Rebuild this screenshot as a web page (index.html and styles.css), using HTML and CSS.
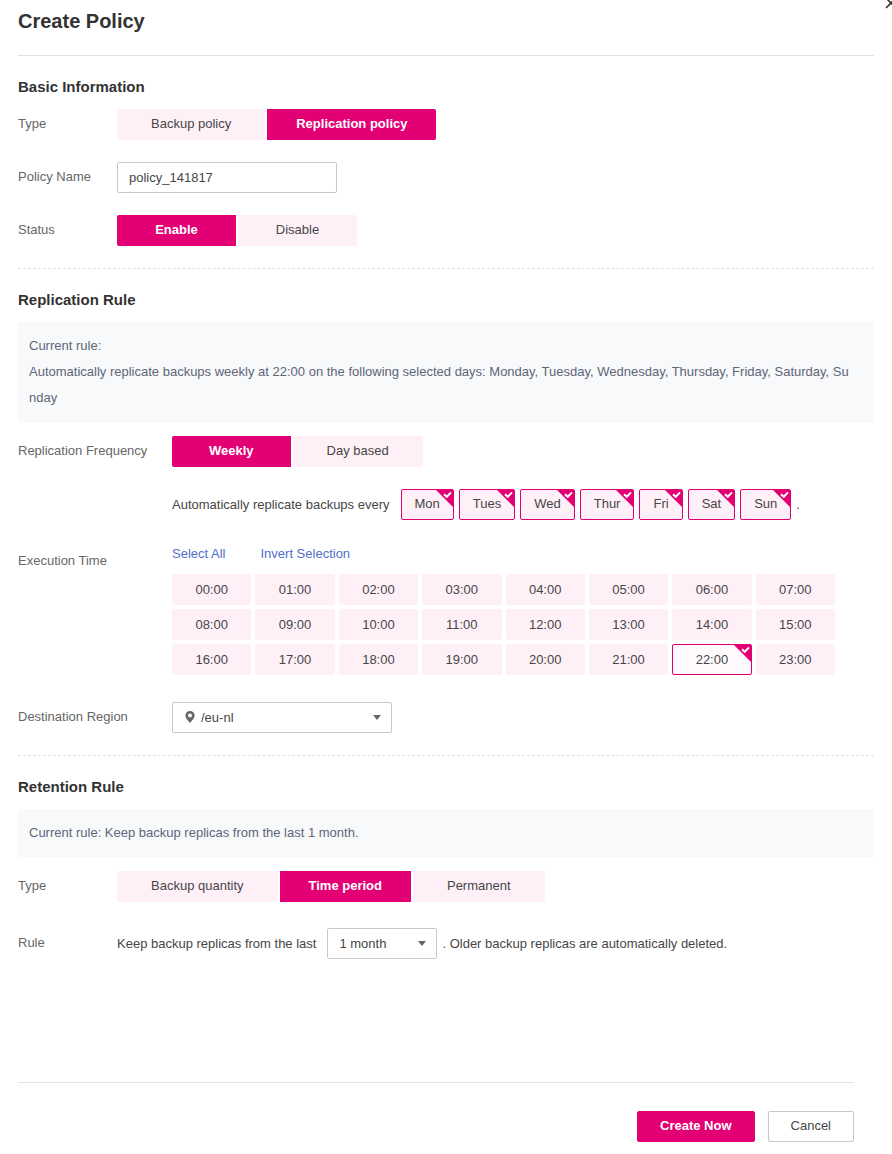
FILE: index.html
```html
<!DOCTYPE html>
<html lang="en">
<head>
<meta charset="utf-8">
<meta name="viewport" content="width=device-width, initial-scale=1">
<title>Create Policy</title>
<link rel="stylesheet" href="styles.css">
</head>
<body>
<svg class="sprite" aria-hidden="true">
  <symbol id="corner" viewBox="0 0 17 17">
    <path d="M0 0h17v17z" fill="#e20074"/>
    <path d="M8 4.200l2.800 2.600L15 2.400" fill="none" stroke="#fff" stroke-width="2"/>
  </symbol>
</svg>
<form class="dialog">
  <header class="dialog-header">
    <h1>Create Policy</h1>
    <button type="button" class="close" aria-label="Close">
      <svg viewBox="0 0 12 12" width="12" height="12"><path d="M1 1l10 10M11 1L1 11" stroke="#333" stroke-width="1.6"/></svg>
    </button>
  </header>

  <section class="section">
    <h2>Basic Information</h2>
    <div class="row">
      <span class="label" id="type-label">Type</span>
      <div class="segments" role="group" aria-labelledby="type-label">
        <button type="button">Backup policy</button>
        <button type="button" class="active" aria-pressed="true">Replication policy</button>
      </div>
    </div>
    <div class="row">
      <label class="label" for="policy-name">Policy Name</label>
      <input class="text-box" id="policy-name" type="text" value="policy_141817">
    </div>
    <div class="row">
      <span class="label" id="status-label">Status</span>
      <div class="segments even" role="group" aria-labelledby="status-label">
        <button type="button" class="active" aria-pressed="true">Enable</button>
        <button type="button">Disable</button>
      </div>
    </div>
  </section>

  <section class="section wide-labels">
    <h2>Replication Rule</h2>
    <p class="summary long">Current rule:<br>Automatically replicate backups weekly at 22:00 on the following selected days: Monday, Tuesday, Wednesday, Thursday, Friday, Saturday, Sunday</p>
    <div class="row">
      <span class="label" id="freq-label">Replication Frequency</span>
      <div class="frequency">
        <div class="segments" role="group" aria-labelledby="freq-label">
          <button type="button" class="active weekly" aria-pressed="true">Weekly</button>
          <button type="button">Day based</button>
        </div>
        <div class="sentence">
          <span>Automatically replicate backups every</span>
          <div class="days">
            <label class="tick"><input type="checkbox" checked>Mon<svg><use href="#corner"/></svg></label>
            <label class="tick"><input type="checkbox" checked>Tues<svg><use href="#corner"/></svg></label>
            <label class="tick"><input type="checkbox" checked>Wed<svg><use href="#corner"/></svg></label>
            <label class="tick"><input type="checkbox" checked>Thur<svg><use href="#corner"/></svg></label>
            <label class="tick"><input type="checkbox" checked>Fri<svg><use href="#corner"/></svg></label>
            <label class="tick"><input type="checkbox" checked>Sat<svg><use href="#corner"/></svg></label>
            <label class="tick"><input type="checkbox" checked>Sun<svg><use href="#corner"/></svg></label>
            <span>.</span>
          </div>
        </div>
      </div>
    </div>
    <div class="row times-row">
      <span class="label">Execution Time</span>
      <div class="times">
        <div class="links"><a href="#all">Select All</a><a href="#invert">Invert Selection</a></div>
        <div class="time-grid">
          <label class="tick"><input type="checkbox">00:00</label>
          <label class="tick"><input type="checkbox">01:00</label>
          <label class="tick"><input type="checkbox">02:00</label>
          <label class="tick"><input type="checkbox">03:00</label>
          <label class="tick"><input type="checkbox">04:00</label>
          <label class="tick"><input type="checkbox">05:00</label>
          <label class="tick"><input type="checkbox">06:00</label>
          <label class="tick"><input type="checkbox">07:00</label>
          <label class="tick"><input type="checkbox">08:00</label>
          <label class="tick"><input type="checkbox">09:00</label>
          <label class="tick"><input type="checkbox">10:00</label>
          <label class="tick"><input type="checkbox">11:00</label>
          <label class="tick"><input type="checkbox">12:00</label>
          <label class="tick"><input type="checkbox">13:00</label>
          <label class="tick"><input type="checkbox">14:00</label>
          <label class="tick"><input type="checkbox">15:00</label>
          <label class="tick"><input type="checkbox">16:00</label>
          <label class="tick"><input type="checkbox">17:00</label>
          <label class="tick"><input type="checkbox">18:00</label>
          <label class="tick"><input type="checkbox">19:00</label>
          <label class="tick"><input type="checkbox">20:00</label>
          <label class="tick"><input type="checkbox">21:00</label>
          <label class="tick"><input type="checkbox" checked>22:00<svg><use href="#corner"/></svg></label>
          <label class="tick"><input type="checkbox">23:00</label>
        </div>
      </div>
    </div>
    <div class="row">
      <label class="label" for="region">Destination Region</label>
      <div class="select region">
        <svg class="pin" viewBox="0 0 10 12" width="10" height="12"><path fill="#666" fill-rule="evenodd" d="M5 0a4.600 4.600 0 0 0-4.600 4.600C.4 7.600 5 12 5 12S9.600 7.600 9.600 4.600A4.600 4.600 0 0 0 5 0zM5 2.500a2 2 0 1 1 0 4 2 2 0 0 1 0-4z"/></svg>
        <select id="region"><option>/eu-nl</option></select>
      </div>
    </div>
  </section>

  <section class="section retention">
    <h2>Retention Rule</h2>
    <p class="summary">Current rule: Keep backup replicas from the last 1 month.</p>
    <div class="row">
      <span class="label" id="keep-label">Type</span>
      <div class="segments" role="group" aria-labelledby="keep-label">
        <button type="button">Backup quantity</button>
        <button type="button" class="active" aria-pressed="true">Time period</button>
        <button type="button">Permanent</button>
      </div>
    </div>
    <div class="row">
      <label class="label" for="period">Rule</label>
      <div class="sentence">
        <span>Keep backup replicas from the last</span>
        <div class="select period"><select id="period"><option>1 month</option></select></div>
        <span class="after">. Older backup replicas are automatically deleted.</span>
      </div>
    </div>
  </section>

  <footer class="dialog-footer">
    <button type="submit" class="primary">Create Now</button>
    <button type="button" class="secondary">Cancel</button>
  </footer>
</form>
</body>
</html>
```

FILE: styles.css
```css
* { box-sizing: border-box; }

body {
  margin: 0;
  background: #fff;
  color: #464646;
  font: 13px/20px "Liberation Sans", Arial, sans-serif;
}

button, input, select { font: inherit; color: inherit; margin: 0; }
button { cursor: pointer; }
.sprite { display: none; }

.dialog {
  position: relative;
  display: flex;
  flex-direction: column;
  min-height: 100vh;
  padding: 0 18px 12px;
  overflow: hidden;
}

.dialog-header { padding: 8px 0 21px; border-bottom: 1px solid #dfe1e6; }
h1 { margin: 0; font-size: 20px; line-height: 26px; color: #333; }

.close {
  position: absolute;
  top: -3px;
  right: -5px;
  padding: 0;
  border: 0;
  background: none;
  line-height: 0;
}

.section {
  display: flex;
  flex-direction: column;
  gap: 22px;
  padding: 21px 0 22px;
  border-bottom: 1px dashed #dfe1e6;
}
.section:last-of-type { border-bottom: 0; }
.retention { gap: 26px; }
h2 { margin: 0 0 -10px; font-size: 15px; line-height: 20px; color: #333; }
.retention h2 { margin-bottom: -14px; }

.summary {
  margin: 0 0 -9px;
  padding: 11px 11px 12px;
  background: #f8f9fb;
  color: #5e6678;
  line-height: 26px;
  word-break: break-all;
}
.summary.long { padding-right: 20px; }
.retention .summary { margin-bottom: -12px; padding-bottom: 11px; }

.row { display: flex; align-items: flex-start; }
.label { flex: 0 0 99px; color: #666; line-height: 30px; }
.wide-labels .label { flex-basis: 154px; }

.segments { display: flex; gap: 2px; border-radius: 2px; overflow: hidden; }
.segments button {
  height: 31px;
  padding: 0 34px 2px;
  border: 0;
  background: #fff0f8;
}
.segments .active { padding: 0 29px 2px; background: #e20074; color: #fff; font-weight: bold; }
.segments.even button { width: 119px; }
.segments .weekly { padding: 0 37px 2px; }

.text-box {
  width: 220px;
  height: 31px;
  padding: 0 11px;
  border: 1px solid #c8c8c8;
  border-radius: 2px;
}

.frequency { display: flex; flex-direction: column; align-items: flex-start; gap: 22px; }
.sentence { display: flex; align-items: center; gap: 11px; }
.days { display: flex; align-items: center; gap: 5px; }

.tick {
  position: relative;
  height: 31px;
  padding: 0 14px;
  border-radius: 2px;
  background: #fff0f8;
  line-height: 31px;
  text-align: center;
  cursor: pointer;
}
.tick input { position: absolute; inset: 0; opacity: 0; }
.tick:has(:checked) { border: 1px solid #e20074; padding: 0 13px; line-height: 28px; }
.tick svg { position: absolute; top: 0; right: 0; width: 17px; height: 17px; }

.times-row .label { padding-top: 4px; }
.times { flex: 0 1 663px; margin-bottom: 5px; }
.links { display: flex; gap: 35px; margin-bottom: 8px; line-height: 24px; }
.links a { color: #526ecc; text-decoration: none; }
.time-grid { display: grid; grid-template-columns: repeat(8, 1fr); gap: 4px; }
.time-grid .tick:has(:checked) { background: #fffafd; line-height: 29px; }

.select { position: relative; }
.select select {
  width: 100%;
  height: 31px;
  padding: 0 28px 0 11px;
  border: 1px solid #c8c8c8;
  border-radius: 2px;
  background: #fff;
  appearance: none;
}
.select::after {
  content: "";
  position: absolute;
  top: 13px;
  right: 11px;
  border: 4px solid transparent;
  border-top: 5px solid #666;
  border-bottom: 0;
  pointer-events: none;
}
.region { width: 220px; }
.region select { padding-left: 28px; }
.pin { position: absolute; top: 9px; left: 13px; }
.period { width: 110px; }
.after { margin-left: -6px; }

.dialog-footer {
  display: flex;
  justify-content: flex-end;
  gap: 13px;
  margin: auto 20px 0 0;
  padding-top: 28px;
  border-top: 1px solid #dfe1e6;
}
.dialog-footer button { height: 31px; padding: 0 22px 1px; border-radius: 2px; }
.primary { border: 1px solid #e20074; background: #e20074; color: #fff; font-weight: bold; }
.secondary { border: 1px solid #c8c8c8; background: #fff; }
```
